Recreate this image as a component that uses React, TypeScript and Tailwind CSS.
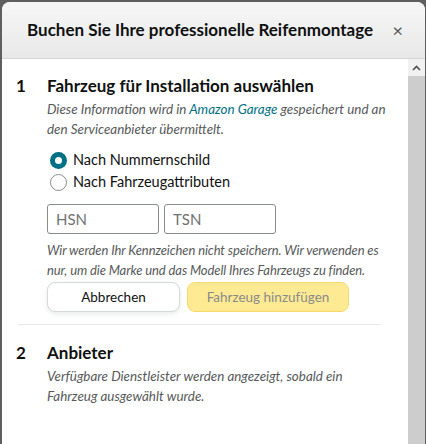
import React, { useState } from 'react';

const FONT = { fontFamily: 'Lato, "Liberation Sans", Arial, sans-serif' };

const Radio: React.FC<{ checked: boolean; label: string; onSelect: () => void }> = ({ checked, label, onSelect }) => (
    <label className="h-[22px] flex items-center gap-[6px] cursor-pointer" onClick={onSelect}>
        {checked ? (
            <span className="w-[17px] h-[17px] rounded-full bg-[#007185] flex items-center justify-center">
                <span className="w-[7px] h-[7px] rounded-full bg-white" />
            </span>
        ) : (
            <span className="w-[17px] h-[17px] rounded-full border border-[#888c8c] bg-white" />
        )}
        <span className="text-[14.5px] text-[#0f1111] leading-[22px]">{label}</span>
    </label>
);

const App: React.FC = () => {
    const [mode, setMode] = useState<'plate' | 'attr'>('plate');

    return (
        <div className="w-[426px] h-[444px] bg-[#5f5f5f] pl-[2px] pt-[2px] overflow-hidden" style={FONT}>
            <div className="w-[423px] h-[442px] bg-white rounded-tl-[8px] rounded-tr-[8px] flex flex-col overflow-hidden">
                {/* Header */}
                <div className="h-[57px] shrink-0 bg-gradient-to-b from-[#f7f7f7] to-[#e8e8e8] border-b border-[#d5d5d5] flex items-center justify-between pl-[25px] pr-[22px]">
                    <h2 className="text-[17px] font-bold text-[#0f1111]">Buchen Sie Ihre professionelle Reifenmontage</h2>
                    <button className="text-[#555] text-[18px] leading-none">×</button>
                </div>

                {/* Body */}
                <div className="flex flex-1 min-h-0">
                    <div className="flex-1 pl-[14px] pr-[18px] pt-[15px]">
                        <div className="flex">
                            <span className="w-[31px] text-[17px] font-bold text-[#0f1111] leading-[24px]">1</span>
                            <div className="flex-1">
                                <h3 className="text-[17px] font-bold text-[#0f1111] leading-[24px]">Fahrzeug für Installation auswählen</h3>
                                <p className="italic text-[13.4px] text-[#565959] leading-[20px] mt-[1px]">
                                    Diese Information wird in <a className="text-[#007185]">Amazon Garage</a> gespeichert und an den Serviceanbieter übermittelt.
                                </p>
                                <div className="mt-[10px] pl-[3px] flex flex-col">
                                    <Radio checked={mode === 'plate'} label="Nach Nummernschild" onSelect={() => setMode('plate')} />
                                    <Radio checked={mode === 'attr'} label="Nach Fahrzeugattributen" onSelect={() => setMode('attr')} />
                                </div>
                                <div className="flex gap-[5px] mt-[11px]">
                                    <input placeholder="HSN" className="w-[112px] h-[30px] border border-[#888c8c] rounded-[3px] px-[8px] text-[15px] placeholder:text-[#6f7373] outline-none" />
                                    <input placeholder="TSN" className="w-[112px] h-[30px] border border-[#888c8c] rounded-[3px] px-[8px] text-[15px] placeholder:text-[#6f7373] outline-none" />
                                </div>
                                <p className="italic text-[13px] tracking-[-0.1px] whitespace-nowrap text-[#565959] leading-[20px] mt-[6px]">
                                    Wir werden Ihr Kennzeichen nicht speichern. Wir verwenden es<br />nur, um die Marke und das Modell Ihres Fahrzeugs zu finden.
                                </p>
                                <div className="flex gap-[7px] mt-[2px]">
                                    <button className="w-[133px] h-[30px] rounded-[8px] border border-[#d5d9d9] bg-white text-[13.5px] text-[#0f1111] shadow-[0_2px_5px_rgba(213,217,217,0.5)]">
                                        Abbrechen
                                    </button>
                                    <button className="w-[162px] h-[30px] rounded-[8px] border border-[#f8d86a] bg-[#ffea94] text-[13.5px] text-[#8a8a8a]">
                                        Fahrzeug hinzufügen
                                    </button>
                                </div>
                            </div>
                        </div>

                        <div className="border-t border-[#e7e7e7] mt-[12px] ml-[2px] mr-[10px]" />

                        <div className="flex pt-[16px]">
                            <span className="w-[31px] text-[17px] font-bold text-[#0f1111] leading-[24px]">2</span>
                            <div className="flex-1">
                                <h3 className="text-[17px] font-bold text-[#0f1111] leading-[24px]">Anbieter</h3>
                                <p className="italic text-[13.4px] text-[#565959] leading-[20px] mt-[1px]">
                                    Verfügbare Dienstleister werden angezeigt, sobald ein<br />Fahrzeug ausgewählt wurde.
                                </p>
                            </div>
                        </div>
                    </div>

                    {/* Scrollbar */}
                    <div className="w-[17px] shrink-0 flex flex-col">
                        <div className="h-[17px] bg-[#f1f1f1] flex items-center justify-center">
                            <svg width="9" height="6" viewBox="0 0 9 6">
                                <path d="M1 5 L4.5 1.5 L8 5" fill="none" stroke="#505050" strokeWidth="1.6" />
                            </svg>
                        </div>
                        <div className="flex-1 bg-[#cdcdcd]" />
                    </div>
                </div>
            </div>
        </div>
    );
};

export default App;
